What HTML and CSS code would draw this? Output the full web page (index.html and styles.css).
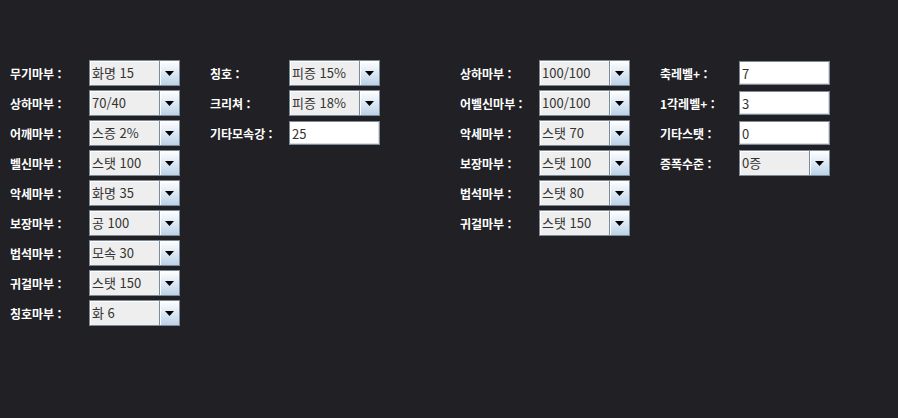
FILE: index.html
```html
<!DOCTYPE html>
<html lang="ko">
<head>
    <meta charset="UTF-8">
    <title>마부 설정</title>
    <link rel="stylesheet" href="styles.css">
</head>
<body>
    <div class="panel">
        <div class="col col-a">
            <div class="row"><span class="label">무기마부 :</span><div class="combo"><span class="combo-value">화명 15</span><span class="combo-btn"><svg width="9" height="5" viewBox="0 0 9 5"><polygon points="0,0 9,0 4.5,5"/></svg></span></div></div>
            <div class="row"><span class="label">상하마부 :</span><div class="combo"><span class="combo-value">70/40</span><span class="combo-btn"><svg width="9" height="5" viewBox="0 0 9 5"><polygon points="0,0 9,0 4.5,5"/></svg></span></div></div>
            <div class="row"><span class="label">어깨마부 :</span><div class="combo"><span class="combo-value">스증 2%</span><span class="combo-btn"><svg width="9" height="5" viewBox="0 0 9 5"><polygon points="0,0 9,0 4.5,5"/></svg></span></div></div>
            <div class="row"><span class="label">벨신마부 :</span><div class="combo"><span class="combo-value">스탯 100</span><span class="combo-btn"><svg width="9" height="5" viewBox="0 0 9 5"><polygon points="0,0 9,0 4.5,5"/></svg></span></div></div>
            <div class="row"><span class="label">악세마부 :</span><div class="combo"><span class="combo-value">화명 35</span><span class="combo-btn"><svg width="9" height="5" viewBox="0 0 9 5"><polygon points="0,0 9,0 4.5,5"/></svg></span></div></div>
            <div class="row"><span class="label">보장마부 :</span><div class="combo"><span class="combo-value">공 100</span><span class="combo-btn"><svg width="9" height="5" viewBox="0 0 9 5"><polygon points="0,0 9,0 4.5,5"/></svg></span></div></div>
            <div class="row"><span class="label">법석마부 :</span><div class="combo"><span class="combo-value">모속 30</span><span class="combo-btn"><svg width="9" height="5" viewBox="0 0 9 5"><polygon points="0,0 9,0 4.5,5"/></svg></span></div></div>
            <div class="row"><span class="label">귀걸마부 :</span><div class="combo"><span class="combo-value">스탯 150</span><span class="combo-btn"><svg width="9" height="5" viewBox="0 0 9 5"><polygon points="0,0 9,0 4.5,5"/></svg></span></div></div>
            <div class="row"><span class="label">칭호마부 :</span><div class="combo"><span class="combo-value">화 6</span><span class="combo-btn"><svg width="9" height="5" viewBox="0 0 9 5"><polygon points="0,0 9,0 4.5,5"/></svg></span></div></div>
        </div>

        <div class="col col-b">
            <div class="row"><span class="label">칭호 :</span><div class="combo"><span class="combo-value">피증 15%</span><span class="combo-btn"><svg width="9" height="5" viewBox="0 0 9 5"><polygon points="0,0 9,0 4.5,5"/></svg></span></div></div>
            <div class="row"><span class="label">크리쳐 :</span><div class="combo"><span class="combo-value">피증 18%</span><span class="combo-btn"><svg width="9" height="5" viewBox="0 0 9 5"><polygon points="0,0 9,0 4.5,5"/></svg></span></div></div>
            <div class="row"><span class="label">기타모속강 :</span><input class="field" type="text" value="25"></div>
        </div>

        <div class="col col-c">
            <div class="row"><span class="label">상하마부 :</span><div class="combo"><span class="combo-value">100/100</span><span class="combo-btn"><svg width="9" height="5" viewBox="0 0 9 5"><polygon points="0,0 9,0 4.5,5"/></svg></span></div></div>
            <div class="row"><span class="label">어벨신마부 :</span><div class="combo"><span class="combo-value">100/100</span><span class="combo-btn"><svg width="9" height="5" viewBox="0 0 9 5"><polygon points="0,0 9,0 4.5,5"/></svg></span></div></div>
            <div class="row"><span class="label">악세마부 :</span><div class="combo"><span class="combo-value">스탯 70</span><span class="combo-btn"><svg width="9" height="5" viewBox="0 0 9 5"><polygon points="0,0 9,0 4.5,5"/></svg></span></div></div>
            <div class="row"><span class="label">보장마부 :</span><div class="combo"><span class="combo-value">스탯 100</span><span class="combo-btn"><svg width="9" height="5" viewBox="0 0 9 5"><polygon points="0,0 9,0 4.5,5"/></svg></span></div></div>
            <div class="row"><span class="label">법석마부 :</span><div class="combo"><span class="combo-value">스탯 80</span><span class="combo-btn"><svg width="9" height="5" viewBox="0 0 9 5"><polygon points="0,0 9,0 4.5,5"/></svg></span></div></div>
            <div class="row"><span class="label">귀걸마부 :</span><div class="combo"><span class="combo-value">스탯 150</span><span class="combo-btn"><svg width="9" height="5" viewBox="0 0 9 5"><polygon points="0,0 9,0 4.5,5"/></svg></span></div></div>
        </div>

        <div class="col col-d">
            <div class="row"><span class="label">축레벨+ :</span><input class="field" type="text" value="7"></div>
            <div class="row"><span class="label">1각레벨+ :</span><input class="field" type="text" value="3"></div>
            <div class="row"><span class="label">기타스탯 :</span><input class="field" type="text" value="0"></div>
            <div class="row"><span class="label">증폭수준 :</span><div class="combo"><span class="combo-value">0증</span><span class="combo-btn"><svg width="9" height="5" viewBox="0 0 9 5"><polygon points="0,0 9,0 4.5,5"/></svg></span></div></div>
        </div>
    </div>
</body>
</html>
```

FILE: styles.css
```css
body {
    margin: 0;
    padding: 0;
    background-color: #212024;
    font-family: "Noto Sans CJK KR", "Noto Sans", sans-serif;
    font-size: 12px;
}
.panel {
    display: flex;
    align-items: flex-start;
    padding: 60px 0 0 10px;
}
.col {
    display: flex;
    flex-direction: column;
    gap: 4px;
}
.col-a, .col-c {
    width: 200px;
}
.col-b {
    width: 250px;
}
.row {
    display: flex;
    align-items: center;
    height: 26px;
}
.label {
    width: 79px;
    color: #ffffff;
    font-weight: bold;
    white-space: nowrap;
}
.combo {
    display: flex;
    width: 91px;
    height: 26px;
    box-sizing: border-box;
    border: 1px solid #7a8a99;
    background-color: #eeeeee;
}
.combo-value {
    flex: 1;
    padding-left: 2px;
    line-height: 24px;
    font-size: 13px;
    color: #333333;
    box-shadow: inset 1px 1px 0 #ffffff;
    border-right: 1px solid #7a8a99;
    white-space: nowrap;
}
.combo-btn {
    width: 19px;
    display: flex;
    align-items: center;
    justify-content: center;
    background: linear-gradient(#ffffff, #bcd2e8);
    box-shadow: inset 1px 1px 0 #ffffff;
}
.combo-btn svg {
    fill: #000000;
}
.field {
    width: 91px;
    height: 24px;
    box-sizing: border-box;
    margin: 0;
    padding: 0 0 0 2px;
    border: 1px solid #7a8a99;
    box-shadow: inset -1px -1px 0 #d8dde3;
    background-color: #ffffff;
    color: #333333;
    font-family: inherit;
    font-size: 13px;
    outline: none;
}
```
